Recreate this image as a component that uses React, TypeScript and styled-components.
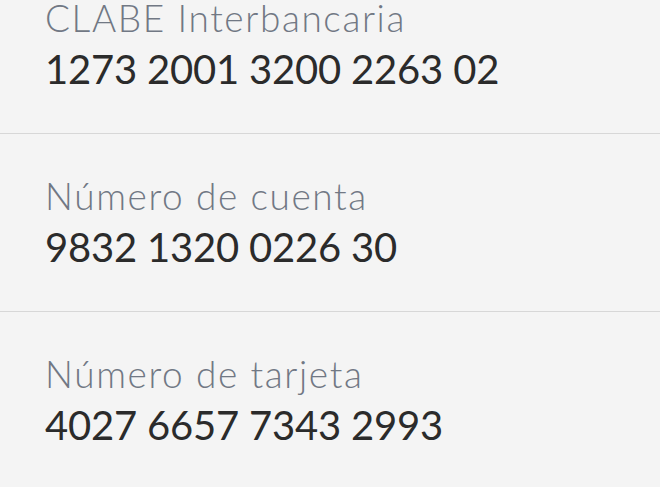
import React from "react";
import styled, { createGlobalStyle } from "styled-components";

const GlobalStyle = createGlobalStyle`
  html, body {
    margin: 0;
    padding: 0;
    background: #f4f4f4;
  }
  body {
    font-family: Lato, "Noto Sans", sans-serif;
    overflow: hidden;
  }
`;

// list is scrolled, first label sits right under the top edge
const List = styled.ul`
  list-style: none;
  margin: -44px 0 0 0;
  padding: 0;
`;

const Item = styled.li`
  padding: 40px 45px 35px;
  border-bottom: 1px solid #d7d7d7;
`;

const Label = styled.div`
  font-size: 37px;
  font-weight: 300;
  line-height: 44px;
  letter-spacing: 1.6px;
  color: #717884;
`;

const Value = styled.div`
  font-size: 40px;
  line-height: 58px;
  letter-spacing: -0.2px;
  color: #2b2b2b;
`;

const accounts = [
  { label: "CLABE Interbancaria", value: "1273 2001 3200 2263 02" },
  { label: "Número de cuenta", value: "9832 1320 0226 30" },
  { label: "Número de tarjeta", value: "4027 6657 7343 2993" },
];

const App: React.FC = () => {
  return (
    <>
      <GlobalStyle />
      <List>
        {accounts.map((a) => (
          <Item key={a.label}>
            <Label>{a.label}</Label>
            <Value>{a.value}</Value>
          </Item>
        ))}
      </List>
    </>
  );
};

export default App;
